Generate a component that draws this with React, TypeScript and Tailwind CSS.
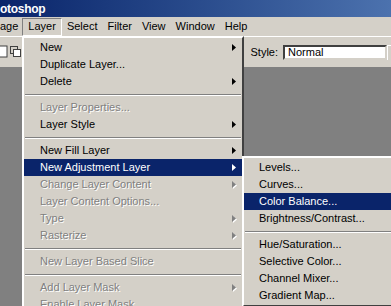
import React from "react";

type Item =
  | { sep: true }
  | { label: string; disabled?: boolean; sub?: boolean; active?: boolean; sep?: false };

const layerMenu: Item[] = [
  { label: "New", sub: true },
  { label: "Duplicate Layer..." },
  { label: "Delete", sub: true },
  { sep: true },
  { label: "Layer Properties...", disabled: true },
  { label: "Layer Style", sub: true },
  { sep: true },
  { label: "New Fill Layer", sub: true },
  { label: "New Adjustment Layer", sub: true, active: true },
  { label: "Change Layer Content", sub: true, disabled: true },
  { label: "Layer Content Options...", disabled: true },
  { label: "Type", sub: true, disabled: true },
  { label: "Rasterize", sub: true, disabled: true },
  { sep: true },
  { label: "New Layer Based Slice", disabled: true },
  { sep: true },
  { label: "Add Layer Mask", sub: true, disabled: true },
  { label: "Enable Layer Mask", disabled: true },
];

const adjustMenu: Item[] = [
  { label: "Levels..." },
  { label: "Curves..." },
  { label: "Color Balance...", active: true },
  { label: "Brightness/Contrast..." },
  { sep: true },
  { label: "Hue/Saturation..." },
  { label: "Selective Color..." },
  { label: "Channel Mixer..." },
  { label: "Gradient Map..." },
];

function Arrow({ active, disabled }: { active?: boolean; disabled?: boolean }) {
  if (disabled) {
    return (
      <svg width="5" height="8" viewBox="0 0 5 8" className="shrink-0">
        <polygon points="1,1 5,4.5 1,8" fill="#ffffff" />
        <polygon points="0,0 4,3.5 0,7" fill="#808080" />
      </svg>
    );
  }
  return (
    <svg width="5" height="8" viewBox="0 0 5 8" className="shrink-0">
      <polygon points="0,0 4,3.5 0,7" fill={active ? "#ffffff" : "#000000"} />
    </svg>
  );
}

function Menu({ items, pl }: { items: Item[]; pl: string }) {
  return (
    <div className="flex flex-col py-[1px]">
      {items.map((it, i) =>
        it.sep ? (
          <div key={i} className="h-[9px] flex flex-col justify-center px-[1px]">
            <div className="h-px bg-[#808080]" />
            <div className="h-px bg-white" />
          </div>
        ) : (
          <div
            key={i}
            className={`h-[17px] flex items-center pr-[5px] ${pl} ${
              it.active ? "bg-[#0a246a] text-white" : it.disabled ? "text-[#808080] [text-shadow:1px_1px_0_#ffffff]" : "text-black"
            }`}
          >
            <span className="flex-1 whitespace-nowrap">{it.label}</span>
            {it.sub && <Arrow active={it.active} disabled={it.disabled} />}
          </div>
        )
      )}
    </div>
  );
}

export default function App() {
  const menus = ["age", "Layer", "Select", "Filter", "View", "Window", "Help"];
  return (
    <div className="relative w-[391px] h-[306px] overflow-hidden flex flex-col bg-[#808080] font-['Liberation_Sans',Arial,sans-serif] text-[11px] leading-none">
      <div className="h-[17px] shrink-0 flex items-center bg-gradient-to-r from-[#0a246a] to-[#4c72ae]">
        <span className="text-white font-bold text-[12px] tracking-[-0.3px]">otoshop</span>
      </div>

      <div className="h-[19px] shrink-0 flex items-center bg-[#d4d0c8]">
        {menus.map((m, i) => (
          <div
            key={m}
            className={`h-[18px] flex items-center ${
              i === 0
                ? "pr-[4px]"
                : i === 1
                ? "px-[5px] border border-t-[#808080] border-l-[#808080] border-r-white border-b-white"
                : "px-[5px]"
            }`}
          >
            {m}
          </div>
        ))}
      </div>

      <div className="h-[32px] shrink-0 flex items-center bg-[#d4d0c8] border-t border-white border-b border-b-[#808080]">
        <svg width="22" height="14" viewBox="0 0 22 14" className="shrink-0">
          <rect x="-1" y="1" width="8" height="11" fill="#ffffff" stroke="#404040" />
          <rect x="10.5" y="1.5" width="7" height="7" fill="#d4d0c8" stroke="#404040" />
          <rect x="13.5" y="4.5" width="7" height="7" fill="#ffffff" stroke="#404040" />
        </svg>
        <div className="ml-auto flex items-center">
          <span className="mr-[5px]">Style:</span>
          <div className="w-[104px] h-[15px] bg-white flex items-center pl-[3px] border-2 border-t-[#404040] border-l-[#404040] border-r-[#d4d0c8] border-b-[#d4d0c8]">
            Normal
          </div>
          <div className="w-[4px] h-[15px] bg-[#d4d0c8] border-l border-t border-white" />
        </div>
      </div>

      <div className="flex-1" />

      <div className="absolute left-[22px] top-[36px] w-[222px] bg-[#d4d0c8] border-2 border-t-white border-l-white border-r-[#404040] border-b-[#404040]">
        <Menu items={layerMenu} pl="pl-[16px]" />
      </div>

      <div className="absolute left-[242px] top-[156px] w-[160px] bg-[#d4d0c8] border-2 border-t-white border-l-white border-r-[#404040] border-b-[#404040]">
        <Menu items={adjustMenu} pl="pl-[15px]" />
      </div>
    </div>
  );
}
